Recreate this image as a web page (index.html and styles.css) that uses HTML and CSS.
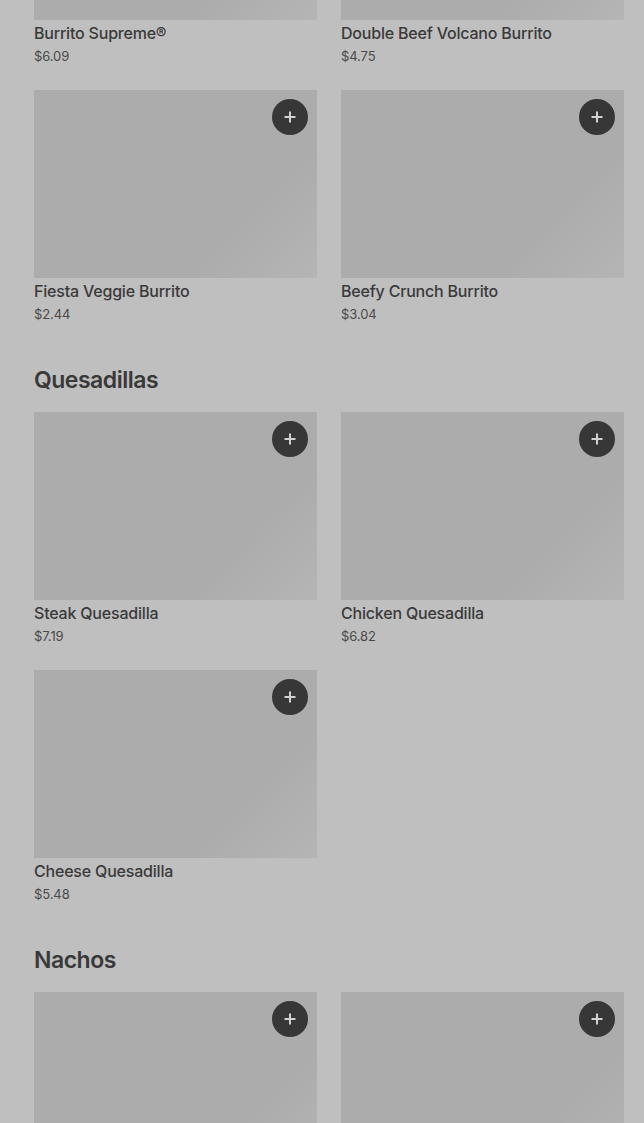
FILE: index.html
```html
<!DOCTYPE html>
<html>
<head>
<meta charset="utf-8">
<link rel="stylesheet" href="styles.css">
</head>
<body>
<main class="menu">
  <section class="section first">
    <div class="grid">
      <div class="item"><div class="thumb"><button class="add"><svg viewBox="0 0 16 16" width="16" height="16"><path d="M8 2.5v11M2.5 8h11" stroke="#d2d2d2" stroke-width="2"/></svg></button></div><div class="name">Burrito Supreme®</div><div class="price">$6.09</div></div>
      <div class="item"><div class="thumb"><button class="add"><svg viewBox="0 0 16 16" width="16" height="16"><path d="M8 2.5v11M2.5 8h11" stroke="#d2d2d2" stroke-width="2"/></svg></button></div><div class="name">Double Beef Volcano Burrito</div><div class="price">$4.75</div></div>
      <div class="item"><div class="thumb"><button class="add"><svg viewBox="0 0 16 16" width="16" height="16"><path d="M8 2.5v11M2.5 8h11" stroke="#d2d2d2" stroke-width="2"/></svg></button></div><div class="name">Fiesta Veggie Burrito</div><div class="price">$2.44</div></div>
      <div class="item"><div class="thumb"><button class="add"><svg viewBox="0 0 16 16" width="16" height="16"><path d="M8 2.5v11M2.5 8h11" stroke="#d2d2d2" stroke-width="2"/></svg></button></div><div class="name">Beefy Crunch Burrito</div><div class="price">$3.04</div></div>
    </div>
  </section>
  <section class="section">
    <h2 class="heading">Quesadillas</h2>
    <div class="grid">
      <div class="item"><div class="thumb"><button class="add"><svg viewBox="0 0 16 16" width="16" height="16"><path d="M8 2.5v11M2.5 8h11" stroke="#d2d2d2" stroke-width="2"/></svg></button></div><div class="name">Steak Quesadilla</div><div class="price">$7.19</div></div>
      <div class="item"><div class="thumb"><button class="add"><svg viewBox="0 0 16 16" width="16" height="16"><path d="M8 2.5v11M2.5 8h11" stroke="#d2d2d2" stroke-width="2"/></svg></button></div><div class="name">Chicken Quesadilla</div><div class="price">$6.82</div></div>
      <div class="item"><div class="thumb"><button class="add"><svg viewBox="0 0 16 16" width="16" height="16"><path d="M8 2.5v11M2.5 8h11" stroke="#d2d2d2" stroke-width="2"/></svg></button></div><div class="name">Cheese Quesadilla</div><div class="price">$5.48</div></div>
    </div>
  </section>
  <section class="section">
    <h2 class="heading">Nachos</h2>
    <div class="grid">
      <div class="item"><div class="thumb"><button class="add"><svg viewBox="0 0 16 16" width="16" height="16"><path d="M8 2.5v11M2.5 8h11" stroke="#d2d2d2" stroke-width="2"/></svg></button></div></div>
      <div class="item"><div class="thumb"><button class="add"><svg viewBox="0 0 16 16" width="16" height="16"><path d="M8 2.5v11M2.5 8h11" stroke="#d2d2d2" stroke-width="2"/></svg></button></div></div>
    </div>
  </section>
</main>
</body>
</html>
```

FILE: styles.css
```css
html, body {
  margin: 0;
  padding: 0;
  background: #bfbfbf;
  overflow: hidden;
}
body {
  font-family: Inter, "Noto Sans", Arial, sans-serif;
  color: #383838;
}
.menu {
  margin-top: -168px;
  padding: 0 20px 0 34px;
}
.section {
  margin-top: 40px;
}
.section.first {
  margin-top: 0;
}
.heading {
  margin: 0 0 16px;
  font-size: 23px;
  line-height: 32px;
  font-weight: 600;
  letter-spacing: -0.5px;
  color: #393939;
}
.grid {
  display: grid;
  grid-template-columns: 283px 283px;
  column-gap: 24px;
  row-gap: 24px;
}
.thumb {
  position: relative;
  height: 188px;
  background: linear-gradient(135deg, #acacac 0%, #acacac 72%, #b5b5b5 100%);
}
.add {
  position: absolute;
  top: 9px;
  right: 9px;
  width: 36px;
  height: 36px;
  border: 0;
  padding: 0;
  border-radius: 50%;
  background: #373737;
  display: flex;
  align-items: center;
  justify-content: center;
}
.add svg {
  display: block;
}
.name {
  margin-top: 1px;
  font-size: 16px;
  line-height: 24px;
  font-weight: 500;
  letter-spacing: -0.2px;
  color: #3a3a3a;
}
.price {
  margin-top: 1px;
  font-size: 13px;
  line-height: 20px;
  letter-spacing: -0.1px;
  color: #4a4a4a;
}
```
